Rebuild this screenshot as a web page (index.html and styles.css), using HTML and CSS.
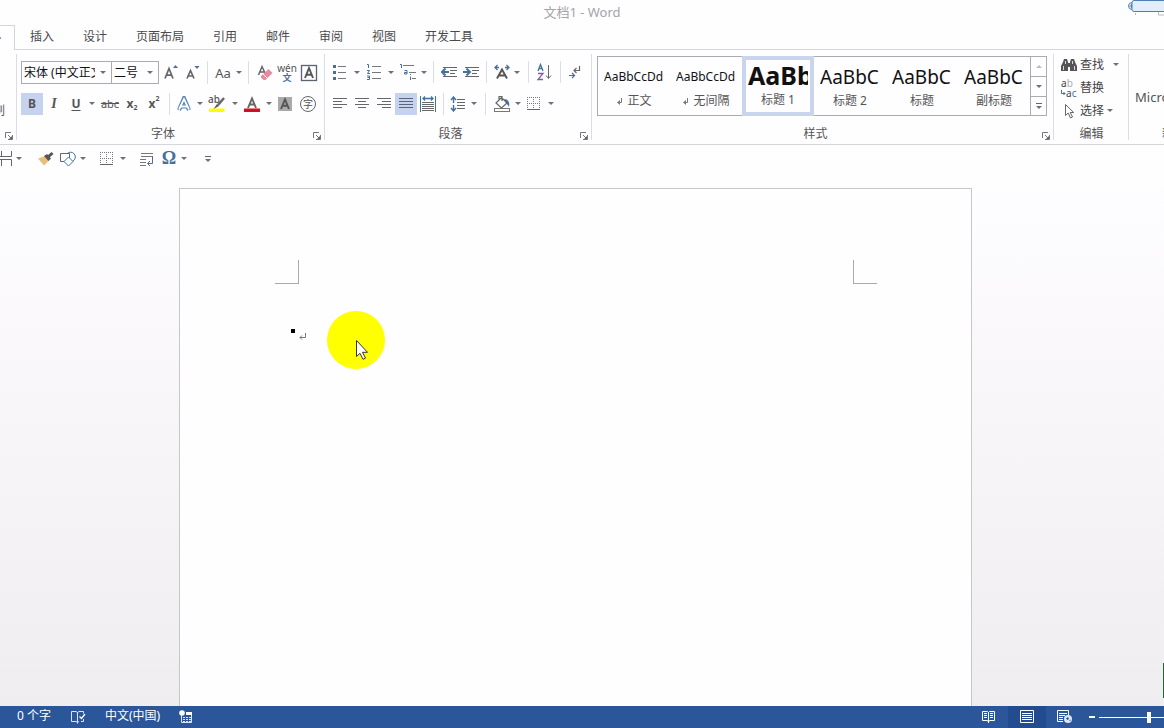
FILE: index.html
```html
<!DOCTYPE html>
<html lang="zh-CN">
<head>
<meta charset="utf-8">
<title>文档1 - Word</title>
<link rel="stylesheet" href="styles.css">
</head>
<body>
<svg class="defs" aria-hidden="true">
  <symbol id="launch" viewBox="0 0 8 8"><path d="M.5 6V.5H6M3 3l3 3M7.500 3v4.500H3" fill="none" stroke="#777"/><path d="M7 4v3H4z" fill="#666"/></symbol>
  <symbol id="grid" viewBox="0 0 14 14"><path d="M0 .5h14M0 6.500h14M.5 0v13M6.500 0v13M12.500 0v13" fill="none" stroke="#777" stroke-dasharray="1 1"/><path d="M0 12.500h13" stroke="#666"/></symbol>
  <symbol id="ret" viewBox="0 0 8 8"><path d="M6.500 0v4.500H1M3 2.500l-2 2 2 2" fill="none" stroke="#777"/></symbol>
  <symbol id="mark" viewBox="0 0 8 8"><path d="M5.500 1v4.500H2" fill="none" stroke="#777"/><path d="M4 3v5L1 5.500z" fill="#777"/></symbol>
</svg>

<header class="titlebar">
  <span class="doc-title">文档1 - Word</span>
  <svg class="corner-widget" width="36" height="17" viewBox="0 0 36 17" aria-hidden="true">
    <circle cx="4" cy="6" r="3.500" fill="#d6e6f5" stroke="#5a86b5"/>
    <path d="M1.500 6h4M3.500 4v4" stroke="#5a86b5"/>
    <rect x="4" y=".5" width="40" height="11" rx="2" fill="#e1eefb" stroke="#4f7fb0"/>
    <path d="M7.500 13v2M30.500 12v3H36" stroke="#bbb" fill="none"/>
  </svg>
</header>

<nav class="tabs" aria-label="功能区">
  <button class="tab active" aria-label="开始"><span class="tab-dot"></span></button>
  <button class="tab">插入</button>
  <button class="tab">设计</button>
  <button class="tab">页面布局</button>
  <button class="tab">引用</button>
  <button class="tab">邮件</button>
  <button class="tab">审阅</button>
  <button class="tab">视图</button>
  <button class="tab">开发工具</button>
</nav>

<section class="ribbon">
  <div class="group clipboard">
    <button class="painter">刷</button>
    <div class="group-foot"><span></span><button class="launcher" aria-label="剪贴板设置"><svg width="8" height="8"><use href="#launch"/></svg></button></div>
  </div>

  <div class="group font">
    <div class="row font-a">
      <label class="combo"><select aria-label="字体"><option>宋体 (中文正文)</option></select><i class="tri"></i></label>
      <label class="combo"><select aria-label="字号"><option>二号</option></select><i class="tri"></i></label>
      <button aria-label="增大字号"><svg width="18" height="18" viewBox="0 0 18 18"><path d="M3 14.500 7 4.500 11 14.500M4.500 11.200h5" fill="none" stroke="#666" stroke-width="1.700"/><path d="M11 4l2.500-3L16 4z" fill="#44719c"/></svg></button>
      <button aria-label="减小字号"><svg width="18" height="18" viewBox="0 0 18 18"><path d="M3 14.500 6.500 6.500 10 14.500M4.500 12h4" fill="none" stroke="#666" stroke-width="1.700"/><path d="M10.500 2h5L13 5z" fill="#44719c"/></svg></button>
      <i class="sep"></i>
      <button class="case" aria-label="更改大小写">Aa</button>
      <i class="tri"></i>
      <i class="sep"></i>
      <button aria-label="清除格式"><svg width="18" height="18" viewBox="0 0 18 18"><path d="M2.500 11 6 2.500 9 9M4 8h4" fill="none" stroke="#666" stroke-width="1.500"/><path d="M5 12 12.500 5l4 4-7 7H7.500L5 13.500z" fill="#e88c9d"/><path d="M7 10l4 4" stroke="#fff"/></svg></button>
      <button class="pinyin" aria-label="拼音指南"><span>wén</span><b>文</b></button>
      <button aria-label="字符边框"><svg width="18" height="18" viewBox="0 0 18 18"><rect x="1.500" y="1.500" width="15" height="15" fill="none" stroke="#5b6470" stroke-width="1.300"/><path d="M5 14 9 4l4 10M6.500 10.800h5" fill="none" stroke="#555" stroke-width="1.900"/></svg></button>
    </div>
    <div class="row font-b">
      <button class="on bold" aria-pressed="true">B</button>
      <button class="italic">I</button>
      <button class="under">U</button>
      <i class="tri"></i>
      <button class="strike">abc</button>
      <button class="script">x<sub>2</sub></button>
      <button class="script">x<sup>2</sup></button>
      <i class="sep"></i>
      <button aria-label="文本效果"><svg width="16" height="16" viewBox="0 0 16 16"><path d="M3 14 8 2.500 13 14M4.500 10.500h7" fill="none" stroke="#5684b0" stroke-width="4.200"/><path d="M3 13.500 8 3 13 13.500M5 10.500h6" fill="none" stroke="#fff" stroke-width="1.800"/></svg></button>
      <i class="tri"></i>
      <button class="marker" aria-label="突出显示"><span>ab</span><svg width="18" height="18" viewBox="0 0 18 18"><path d="M1 13.500h15.500v3.500H1z" fill="#ff0"/><path d="M16 3 10 10" stroke="#666" stroke-width="2.500"/><path d="M9 9l2 2L5.500 14z" fill="#555"/></svg></button>
      <i class="tri"></i>
      <button aria-label="字体颜色"><svg width="16" height="18" viewBox="0 0 16 18"><path d="M4 13 8 3.500 12 13M5 9.500h6" fill="none" stroke="#666" stroke-width="1.900"/><path d="M0 13.500h16V17H0z" fill="#d01020"/></svg></button>
      <i class="tri"></i>
      <button aria-label="字符底纹"><svg width="16" height="16" viewBox="0 0 16 16"><path d="M1 1h14v14H1z" fill="#aaa"/><path d="M4 13 8 3.500 12 13M5.500 9.800h5" fill="none" stroke="#555" stroke-width="1.900"/></svg></button>
      <button class="circled" aria-label="带圈字符"><span>字</span></button>
    </div>
    <div class="group-foot"><span>字体</span><button class="launcher" aria-label="字体设置"><svg width="8" height="8"><use href="#launch"/></svg></button></div>
  </div>

  <div class="group para">
    <div class="row para-a">
      <button aria-label="项目符号"><svg width="16" height="16" viewBox="0 0 16 16"><path d="M1 1h3v3H1zM1 7h3v3H1zM1 13h3v3H1z" fill="#44719c"/><path d="M6 2.500h8M6 8.500h8M6 14.500h8" stroke="#777"/></svg></button>
      <i class="tri"></i>
      <button aria-label="编号"><svg width="16" height="16" viewBox="0 0 16 16"><path d="M1 .5h1.500V4M1 6.500h2.500L1.500 9.500H4M1 12h2.500v3.500H1M1.500 13.500h2" fill="none" stroke="#44719c"/><path d="M6 2.500h9M6 8.500h9M6 14.500h9" stroke="#777"/></svg></button>
      <i class="tri"></i>
      <button aria-label="多级列表"><svg width="18" height="16" viewBox="0 0 18 16"><path d="M1 .5h1.500V4M5.500 6.500H8V10H5.500V8.500H8M11.500 10v1M11.500 12.500V16" fill="none" stroke="#44719c"/><path d="M4 1.500h11M10 8.500h7M13 14.500h4" stroke="#777"/></svg></button>
      <i class="tri"></i>
      <i class="sep"></i>
      <button aria-label="减少缩进"><svg width="16" height="14" viewBox="0 0 16 14"><path d="M2 2.500h14M9 5.500h7M9 8.500h5M2 11.500h14" stroke="#666"/><path d="M8 7H2M4.500 3.500 1 7l3.500 3.500" fill="none" stroke="#44719c" stroke-width="2"/></svg></button>
      <button aria-label="增加缩进"><svg width="16" height="14" viewBox="0 0 16 14"><path d="M2 2.500h14M9 5.500h7M9 8.500h5M2 11.500h14" stroke="#666"/><path d="M0 7h6M3.500 3.500 7 7l-3.500 3.500" fill="none" stroke="#44719c" stroke-width="2"/></svg></button>
      <i class="sep"></i>
      <button aria-label="中文版式"><svg width="18" height="16" viewBox="0 0 18 16"><path d="M4 14.500 9 5.500l5 9M6 11.500h6" fill="none" stroke="#555" stroke-width="1.900"/><path d="M6 3.500H2M4.500 1 2 3.500 4.500 6M12 3.500h4M13.500 1 16 3.500 13.500 6" fill="none" stroke="#44719c" stroke-width="1.300"/></svg></button>
      <i class="tri"></i>
      <i class="sep"></i>
      <button aria-label="排序"><svg width="16" height="18" viewBox="0 0 16 18"><path d="M2 8 4.500 1.500 7 8M3 5.500h3" fill="none" stroke="#44719c" stroke-width="1.300"/><path d="M2 10.500h5L2 16.500h5" fill="none" stroke="#80609a" stroke-width="1.300"/><path d="M12.500 2v13M10 12.500l2.500 3 2.500-3" fill="none" stroke="#666"/></svg></button>
      <i class="sep"></i>
      <button aria-label="显示编辑标记"><svg width="14" height="16" viewBox="0 0 14 16"><path d="M11.500 2v4.500H6M8.500 4 6 6.500 8.500 9" fill="none" stroke="#666" stroke-width="1.200"/><path d="M1 11.500h5M4 9l2.500 2.500L4 14" fill="none" stroke="#44719c" stroke-width="1.200"/></svg></button>
    </div>
    <div class="row para-b">
      <button aria-label="左对齐"><svg width="14" height="14" viewBox="0 0 14 14"><path d="M0 1.500h14M0 4.500h9M0 7.500h14M0 10.500h9" stroke="#666"/></svg></button>
      <button aria-label="居中"><svg width="14" height="14" viewBox="0 0 14 14"><path d="M0 1.500h14M3 4.500h8M0 7.500h14M3 10.500h8" stroke="#666"/></svg></button>
      <button aria-label="右对齐"><svg width="14" height="14" viewBox="0 0 14 14"><path d="M0 1.500h14M5 4.500h9M0 7.500h14M5 10.500h9" stroke="#666"/></svg></button>
      <button class="on" aria-pressed="true" aria-label="两端对齐"><svg width="14" height="14" viewBox="0 0 14 14"><path d="M0 1.500h14M0 4.500h14M0 7.500h14M0 10.500h14" stroke="#5c6478"/></svg></button>
      <button aria-label="分散对齐"><svg width="16" height="16" viewBox="0 0 16 16"><path d="M.5 0v16M15.500 0v16" stroke="#44719c"/><path d="M2 6.500h12M2 8.500h12M2 10.500h12M2 12.500h12M2 14.500h12" stroke="#666"/><path d="M3 2.500h10M5 .5l-2 2 2 2M11 .5l2 2-2 2" fill="none" stroke="#44719c" stroke-width="1.300"/></svg></button>
      <i class="sep"></i>
      <button aria-label="行距"><svg width="16" height="16" viewBox="0 0 16 16"><path d="M3.500 1v6M1 4l2.500-3L6 4M3.500 9v6M1 12l2.500 3L6 12" fill="none" stroke="#44719c" stroke-width="1.400"/><path d="M7 3.500h8M7 6.500h8M7 9.500h8M7 12.500h8" stroke="#666"/></svg></button>
      <i class="tri"></i>
      <i class="sep"></i>
      <button aria-label="底纹"><svg width="18" height="18" viewBox="0 0 18 18"><path d="M3 8 8.500 2.500 14 8l-5.500 5zM6 6V1.500h3V6" fill="#fff" stroke="#666" stroke-width="1.200"/><path d="M11 4c4 0 6 3 5 8-1-2-2-3-3-4z" fill="#44719c"/><rect x="1.500" y="13.500" width="15" height="3" fill="#fff" stroke="#777"/></svg></button>
      <i class="tri"></i>
      <button aria-label="边框"><svg width="14" height="14"><use href="#grid"/></svg></button>
      <i class="tri"></i>
    </div>
    <div class="group-foot"><span>段落</span><button class="launcher" aria-label="段落设置"><svg width="8" height="8"><use href="#launch"/></svg></button></div>
  </div>

  <div class="group styles">
    <div class="gallery">
      <button class="style"><span class="sample">AaBbCcDd</span><span class="name"><svg width="8" height="8"><use href="#mark"/></svg>正文</span></button>
      <button class="style"><span class="sample">AaBbCcDd</span><span class="name"><svg width="8" height="8"><use href="#mark"/></svg>无间隔</span></button>
      <button class="style chosen"><span class="sample heavy">AaBb</span><span class="name">标题 1</span></button>
      <button class="style"><span class="sample large">AaBbC</span><span class="name">标题 2</span></button>
      <button class="style"><span class="sample large">AaBbC</span><span class="name">标题</span></button>
      <button class="style"><span class="sample large">AaBbC</span><span class="name">副标题</span></button>
      <div class="scroller">
        <button aria-label="上一行"><i class="tri up"></i></button>
        <button aria-label="下一行"><i class="tri"></i></button>
        <button class="more" aria-label="其他"><i class="tri"></i></button>
      </div>
    </div>
    <div class="group-foot"><span>样式</span><button class="launcher" aria-label="样式设置"><svg width="8" height="8"><use href="#launch"/></svg></button></div>
  </div>

  <div class="group editing">
    <div class="commands">
      <button><svg width="16" height="14" viewBox="0 0 16 14"><path d="M2 4 3 1h3l1 3v9H0V8zM9 4l1-3h3l1 3 2 4v5H9z" fill="#555"/><path d="M7 5h2v4H7z" fill="#555"/><path d="M2.500 8v4M4.500 3v3M11.500 3v3M13.500 8v4" stroke="#fff" stroke-width=".8"/></svg>查找<i class="tri far"></i></button>
      <button><span class="swap"><span>a<em>b</em></span><span><svg width="5" height="6" viewBox="0 0 5 6"><path d="M.5 0v3.500H4M2.500 2 4 3.500 2.500 5" fill="none" stroke="#44719c"/></svg>a<b>c</b></span></span>替换</button>
      <button><svg width="16" height="16" viewBox="0 0 16 16"><path d="M4.500 1.500v11l2.700-2.500 2.300 5 2-1-2.300-4.500h3.500z" fill="#fff" stroke="#666"/></svg>选择<i class="tri"></i></button>
    </div>
    <div class="group-foot"><span>编辑</span></div>
  </div>

  <div class="group addin">
    <button class="micro">Microsoft</button>
    <div class="group-foot"><span>新建组</span></div>
  </div>
</section>

<div class="quick">
  <button aria-label="分隔"><svg width="14" height="16" viewBox="0 0 14 16"><path d="M1.500 0v5.500h10V0M1.500 15V8.500h10V15M0 5.500h2M0 8.500h2" fill="none" stroke="#666"/></svg></button>
  <i class="tri"></i>
  <i></i>
  <button aria-label="格式刷"><svg width="18" height="16" viewBox="0 0 18 16"><path d="M1 7.500 8 5l4 4.500L7 14.500z" fill="#e9bd7c"/><path d="M7 5l3-2 4 4.500-2.500 2.500z" fill="#555"/><path d="M11 6l4.500-4" stroke="#555" stroke-width="3"/></svg></button>
  <button aria-label="形状"><svg width="18" height="16" viewBox="0 0 18 16"><circle cx="11.500" cy="6" r="4.800" fill="#fff" stroke="#44719c"/><path d="M1.500 2.500h9v8h-9z" fill="#fff" stroke="#666"/><path d="M5 10.500 9.500 6l4.500 4.500L9.500 15z" fill="#fff" stroke="#44719c"/></svg></button>
  <i class="tri"></i>
  <i></i>
  <button aria-label="边框"><svg width="14" height="14"><use href="#grid"/></svg></button>
  <i class="tri"></i>
  <i></i>
  <button aria-label="文字环绕"><svg width="16" height="14" viewBox="0 0 16 14"><path d="M2 1.500h12M2 4.500h12M1 7.500h6M1 10.500h6M1 13.500h6" stroke="#777"/><path d="M13.500 4v7.500H9M11 9l-2.500 2.500L11 14" fill="none" stroke="#44719c"/></svg></button>
  <button class="omega" aria-label="符号">Ω</button>
  <i class="tri"></i>
  <i></i>
  <button class="more" aria-label="自定义"><i class="tri"></i></button>
</div>

<main class="workspace">
  <article class="page">
    <div class="crops"><i class="crop left"></i><i class="crop right"></i></div>
    <div class="line"><i class="square"></i><svg width="8" height="8"><use href="#ret"/></svg></div>
    <svg class="pointer" width="58" height="58" viewBox="0 0 58 58" aria-hidden="true"><circle cx="29" cy="29" r="29" fill="#ff0"/><path d="M29.500 29.500v16l3.500-3.200 3 6 2.500-1.200-3-5.800h5z" fill="#fff" stroke="#333"/></svg>
  </article>
  <i class="edge"></i>
</main>

<footer class="status">
  <span>0 个字</span>
  <button aria-label="校对"><svg width="16" height="14" viewBox="0 0 16 14"><path d="M7.500 2.500v11M7.500 2.500 6 1.500H1.500v10H6l1.500 1L9 11.500M7.500 2.500 9 1.500h4.500v2M13.500 9v2.500H11" fill="none" stroke="#dce6f3"/><path d="M9.500 6.500l2 2L15 4" fill="none" stroke="#fff" stroke-width="1.300"/></svg></button>
  <span>中文(中国)</span>
  <button aria-label="宏"><svg width="14" height="14" viewBox="0 0 14 14"><path d="M2.500 4.500v8h10v-9H7" fill="none" stroke="#dce6f3"/><path d="M7 2h6v3H7z" fill="#fff"/><path d="M4 7.500h8M4 9.500h8M4 11.500h8" stroke="#dce6f3" stroke-dasharray="2 1"/><circle cx="3" cy="3" r="2.800" fill="#fff"/></svg></button>
  <div class="views">
    <button aria-label="阅读视图"><svg width="14" height="14" viewBox="0 0 14 14"><path d="M6.500 2.500 5.500 1.500H.5v9h5l1 1.500 1-1.500h5v-9h-5zM6.500 2v11" fill="none" stroke="#fff"/><path d="M2 3.500h3M2 5.500h3M2 7.500h3M8 3.500h3M8 5.500h3M8 7.500h3" stroke="#fff"/></svg></button>
    <button class="current" aria-label="页面视图"><svg width="14" height="14" viewBox="0 0 14 14"><path d="M.5.5h13v12H.5z" fill="none" stroke="#fff"/><path d="M2 3.500h10M2 5.500h10M2 7.500h10M2 9.500h10" stroke="#fff"/></svg></button>
    <button aria-label="Web 视图"><svg width="16" height="14" viewBox="0 0 16 14"><path d="M11.500 5V.5H.5v11H6" fill="none" stroke="#fff"/><path d="M2 3.500h8M2 5.500h6M2 7.500h4M2 9.500h4" stroke="#fff"/><circle cx="11" cy="9" r="4" fill="#dce6f3"/><path d="M9 8.500l2-1.500 1 2-1.500 1zM12 10.500l1.500-1v1.500z" fill="#2b579a"/></svg></button>
    <button class="minus" aria-label="缩小"></button>
    <input class="zoom" type="range" min="0" max="100" value="50" aria-label="缩放">
  </div>
</footer>
</body>
</html>
```

FILE: styles.css
```css
* { box-sizing: border-box; }

body {
  margin: 0;
  height: 100vh;
  display: flex;
  flex-direction: column;
  overflow: hidden;
  background: #fefdff;
  color: #555;
  font: 12px/16px "Noto Sans", "Noto Sans CJK SC", sans-serif;
}

button {
  display: flex;
  align-items: center;
  justify-content: center;
  min-width: 0;
  margin: 0;
  padding: 0;
  border: 0;
  background: none;
  color: inherit;
  font: inherit;
  white-space: nowrap;
}

svg { display: block; flex: none; }
.defs { position: absolute; width: 0; height: 0; }

.tri::after {
  content: "";
  display: block;
  border: 3px solid transparent;
  border-top-color: #707070;
  border-bottom: 0;
}
.tri.up::after { border-top: 0; border-bottom: 3px solid #bbb; }

/* Title and tabs */
.titlebar {
  flex: none;
  height: 25px;
  padding-top: 4px;
  text-align: center;
  color: #a5a5a5;
  font-size: 13px;
}
.corner-widget { position: absolute; top: 0; right: 0; }

.tabs {
  flex: none;
  display: flex;
  gap: 29px;
  height: 25px;
  border-bottom: 1px solid #d5d5dc;
  color: #4a4a4a;
}
.tab.active {
  width: 15px;
  height: 25px;
  margin-right: -14px;
  border: solid #d5d5dc;
  border-width: 1px 1px 0 0;
  background: #fefdff;
  justify-content: flex-start;
}
.tab-dot { width: 1px; height: 2px; background: #7d9cc8; }

/* Ribbon */
.ribbon {
  flex: none;
  display: flex;
  height: 95px;
  border-bottom: 1px solid #d5d5dc;
  overflow: hidden;
}
.group {
  flex: none;
  position: relative;
  display: flex;
  flex-direction: column;
  justify-content: space-between;
  padding: 11px 4px 0 4px;
}
.group::after {
  content: "";
  position: absolute;
  top: 4px;
  right: 0;
  bottom: 4px;
  width: 1px;
  background: #dcdce3;
}
.group-foot {
  height: 20px;
  display: flex;
  align-items: center;
}
.group-foot span { flex: 1; text-align: center; }
.launcher { padding-top: 4px; }
.font .group-foot span, .para .group-foot span, .styles .group-foot span { padding-right: 8px; }

.clipboard { width: 17px; }
.clipboard { padding-left: 0; }
.painter { flex: 1; justify-content: flex-end; align-items: flex-end; width: 5px; padding-bottom: 5px; }
.font { width: 308px; }
.para { width: 267px; }
.styles { flex: 1 0 462px; }
.editing { width: 75px; }
.addin { width: 36px; padding: 11px 0 0 6px; }
.addin::after { display: none; }

.row {
  display: grid;
  height: 22px;
  margin-bottom: 9px;
  align-items: stretch;
}
.row .tri, .quick .tri { display: grid; place-items: center; }
.sep { justify-self: center; width: 1px; background: #dcdce3; }
.on { background: #c5d3ef; }

.font-a { grid-template-columns: 91px 47px 23px 22px 7px 24px 8px 11px 22px 22px 22px; }
.font-b { grid-template-columns: 22px 22px 22px 10px 26px 18px 26px 5px 24px 7px 28px 7px 28px 6px 26px 20px; }
.para-a { grid-template-columns: 22px 12px 22px 12px 22px 9px 10px 22px 22px 9px 22px 8px 14px 18px 14px 16px; }
.para-b { grid-template-columns: 22px 22px 22px 22px 22px 8px 22px 10px 12px 22px 10px 22px 12px; }

.combo {
  display: grid;
  grid-template-columns: 1fr 16px;
  height: 23px;
  border: 1px solid #ababb3;
}
.combo + .combo { border-left: 0; }
.combo select {
  appearance: none;
  min-width: 0;
  border: 0;
  padding: 0 0 0 2px;
  background: none;
  color: #111;
  font: inherit;
  outline: 0;
}

.case { font-size: 13px; }
.pinyin { flex-direction: column; font-size: 10px; line-height: 10px; }
.pinyin b { font-size: 9px; color: #44719c; }
.bold, .under { font-weight: 700; }
.italic { font: italic 700 14px "Liberation Serif", serif; }
.under { text-decoration: underline; text-underline-offset: 2px; }
.strike { font-size: 11px; text-decoration: line-through; }
.script { font-weight: 700; }
.script sub, .script sup { font-size: 7px; line-height: 8px; }
.script sub { align-self: flex-end; padding-bottom: 3px; }
.script sup { align-self: flex-start; padding-top: 2px; }
.marker { display: grid; }
.marker > * { grid-area: 1 / 1; }
.marker span { align-self: start; justify-self: start; font-size: 10px; line-height: 12px; font-weight: 500; }
.circled span {
  width: 16px;
  height: 16px;
  border: 1px solid #666;
  border-radius: 50%;
  font-size: 10px;
  line-height: 14px;
}

/* Style gallery */
.styles { padding: 6px 4px 0 5px; }
.gallery {
  display: grid;
  grid-template-columns: repeat(6, 72px) 1fr;
  height: 60px;
  margin-right: 3px;
  border: 1px solid #ababb3;
}
.style {
  flex-direction: column;
  justify-content: flex-start;
  overflow: hidden;
}
.sample {
  width: 60px;
  height: 34px;
  display: flex;
  align-items: center;
  justify-content: flex-start;
  padding-top: 6px;
  overflow: hidden;
  color: #111;
  font-size: 12px;
}
.sample.large { font-size: 19px; }
.sample.heavy { font-size: 25px; font-weight: 700; padding: 0; height: 30px; }
.name { display: flex; align-items: center; gap: 3px; line-height: 20px; }
.chosen { border: 4px solid #c9d5ec; margin: -1px 0; }
.scroller {
  display: grid;
  grid-template-rows: repeat(3, 1fr);
  border-left: 1px solid #ababb3;
}
.scroller button + button { border-top: 1px solid #ababb3; }
.more { flex-direction: column; gap: 2px; }
.more::before { content: ""; width: 6px; height: 1px; background: #666; }

/* Editing */
.editing { padding-top: 3px; }
.commands { display: grid; grid-auto-rows: 23px; padding-left: 3px; }
.commands button { justify-content: flex-start; gap: 3px; color: #444; }
.commands .far { padding-left: 6px; }
.swap { width: 16px; font-size: 10px; line-height: 10px; }
.swap > span { display: flex; align-items: center; }
.swap em { font-style: normal; color: #aaa; }
.swap b { font-weight: 400; color: #44719c; }
.micro { flex: 1; justify-content: flex-start; padding-top: 8px; font-size: 13px; }
.addin .group-foot { padding-left: 27px; white-space: nowrap; }

/* Quick access */
.quick {
  flex: none;
  display: grid;
  grid-template-columns: 14px 10px 11px 22px 22px 8px 9px 22px 10px 8px 22px 22px 8px 12px 16px;
  height: 27px;
}
.omega { font: 700 18px "Liberation Serif", serif; color: #44719c; }

/* Document area */
.workspace {
  flex: 1;
  min-height: 0;
  position: relative;
  padding: 16px 14px 0 0;
  background: linear-gradient(#fefdff, #f0edf1);
  overflow: hidden;
}
.page {
  position: relative;
  width: 793px;
  height: 1120px;
  margin: 0 auto;
  padding: 71px 94px 0 95px;
  border: 1px solid #c6c6cb;
  background: #fefdff;
}
.crops { display: flex; justify-content: space-between; }
.crop { width: 24px; height: 24px; border: 0 solid #aaa; border-bottom-width: 1px; }
.crop.left { border-right-width: 1px; }
.crop.right { border-left-width: 1px; }
.line { display: flex; gap: 4px; padding: 45px 0 0 16px; }
.line svg { margin-top: 4px; }
.square { width: 4px; height: 4px; background: #000; }
.pointer { position: absolute; left: 147px; top: 122px; }
.edge { position: absolute; right: 0; bottom: 8px; width: 1px; height: 35px; background: #1e6b2e; }

/* Status bar */
.status {
  flex: none;
  display: flex;
  align-items: center;
  gap: 19px;
  height: 22px;
  padding-left: 17px;
  background: #2b579a;
  color: #fff;
  overflow: hidden;
}
.status > span { padding-bottom: 2px; }
.views { display: flex; margin-left: auto; align-items: center; height: 22px; }
.views button { width: 38px; height: 22px; }
.views .current { background: #224c8f; }
.views .minus { width: 15px; justify-content: flex-end; padding-right: 4px; }
.minus::before { content: ""; width: 6px; height: 2px; background: #fff; }
.zoom {
  appearance: none;
  width: 100px;
  height: 12px;
  margin: 0 -35px 0 0;
  background: linear-gradient(#fff, #fff) center / 100% 1px no-repeat;
}
.zoom::-webkit-slider-thumb {
  appearance: none;
  width: 4px;
  height: 11px;
  background: #fff;
}
```
